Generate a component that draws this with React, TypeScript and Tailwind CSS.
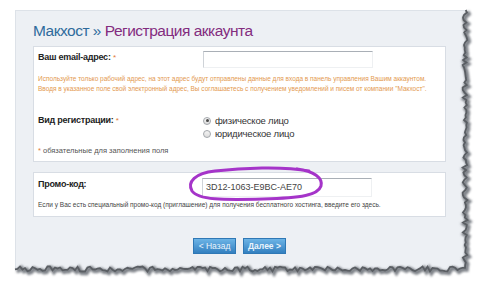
import React from 'react';

// torn-paper edge along the right and bottom of the sheet
const edgePoints: string[] = (() => {
  let s = 11;
  const rnd = () => {
    s = (s * 9301 + 49297) % 233280;
    return s / 233280;
  };
  const pts: string[] = [];
  for (let y = 10; y <= 266; y += 2.5) pts.push(`${(465 + (rnd() - 0.5) * 5).toFixed(1)},${y}`);
  for (let x = 465; x >= 13; x -= 2.5) pts.push(`${x},${(269 + (rnd() - 0.5) * 5).toFixed(1)}`);
  return pts;
})();

function TornEdge() {
  const line = edgePoints.join(' ');
  const cover = `M480,0 L465,0 L${edgePoints.join(' L')} L0,270 L0,287 L480,287 Z`;
  return (
    <svg className="absolute inset-0 pointer-events-none" width="480" height="287" viewBox="0 0 480 287">
      <defs>
        <filter id="blur" x="-5%" y="-5%" width="110%" height="110%">
          <feGaussianBlur stdDeviation="1.2" />
        </filter>
      </defs>
      <path d={cover} fill="#ffffff" />
      <polyline points={line} fill="none" stroke="#80848a" strokeWidth="4.5" filter="url(#blur)" transform="translate(1.5,1.5)" />
      <polyline points={line} fill="none" stroke="#5a5e63" strokeWidth="1.8" />
    </svg>
  );
}

function Radio({ checked, label }: { checked?: boolean; label: string }) {
  return (
    <div className="flex items-center gap-[4px] h-[13px]">
      <span className="w-[8px] h-[8px] rounded-full border border-[#a3a7ac] bg-gradient-to-b from-[#f4f4f4] to-[#dcdcdc] flex items-center justify-center">
        {checked && <span className="w-[3px] h-[3px] rounded-full bg-[#4a4a4a]" />}
      </span>
      <span className="text-[9.5px] leading-[13px] tracking-[-0.2px] text-[#333]">{label}</span>
    </div>
  );
}

const inputCls =
  'w-[170px] bg-white border border-t-[#a9afb6] border-l-[#cfd3d8] border-r-[#eef0f2] border-b-[#eef0f2]';

const labelCls = 'pl-[4px] text-[9px] leading-[13px] tracking-[-0.25px] font-bold text-[#222]';

export default function App() {
  return (
    <div className="relative w-[480px] h-[287px] overflow-hidden bg-white font-['Liberation_Sans',Arial,sans-serif]">
      <div className="pt-[10px] pl-[15px]">
        <div className="w-[458px] h-[265px] bg-[#edf0f4] border-t border-l border-[#dde2e8] pl-[17px] pt-[10px]">
          {/* Title */}
          <h1 className="text-[15.5px] leading-[20px] tracking-[-0.5px]">
            <span className="text-[#2f6b9c]">Макхост »</span>{' '}
            <span className="text-[#832c7f]">Регистрация аккаунта</span>
          </h1>

          {/* Email + type */}
          <div className="mt-[5px] w-[413px] h-[116px] bg-white border border-[#d8dde4]">
            <div className="flex pt-[4px]">
              <div className={`${labelCls} w-[169px]`}>
                Ваш email-адрес: <span className="font-normal text-[8px] text-[#e07b39]">*</span>
              </div>
              <div className={`${inputCls} h-[17px]`} />
            </div>
            <div className="pl-[4px] mt-[6px] text-[6.5px] leading-[10px] text-[#e3994f] whitespace-nowrap">
              <div>
                Используйте только рабочий адрес, на этот адрес будут отправлены данные для входа в панель управления Вашим аккаунтом.
              </div>
              <div>
                Вводя в указанное поле свой электронный адрес, Вы соглашаетесь с получением уведомлений и писем от компании "Макхост".
              </div>
            </div>
            <div className="flex mt-[20px]">
              <div className={`${labelCls} w-[169px]`}>
                Вид регистрации: <span className="font-normal text-[8px] text-[#e07b39]">*</span>
              </div>
              <div className="flex flex-col">
                <Radio checked label="физическое лицо" />
                <Radio label="юридическое лицо" />
              </div>
            </div>
            <div className="pl-[4px] mt-[5px] text-[7.5px] leading-[11px] text-[#555]">
              <span className="text-[#e07b39]">*</span> обязательные для заполнения поля
            </div>
          </div>

          {/* Promo */}
          <div className="relative mt-[10px] w-[413px] h-[45px] bg-white border border-[#d8dde4]">
            <div className="flex pt-[5px]">
              <div className={`${labelCls} w-[168px]`}>Промо-код:</div>
              <div className={`${inputCls} h-[19px] pl-[3px] text-[9px] leading-[17px] text-[#444]`}>3D12-1063-E9BC-AE70</div>
            </div>
            <div className="pl-[4px] mt-[3px] text-[6.5px] leading-[10px] text-[#444] whitespace-nowrap">
              Если у Вас есть специальный промо-код (приглашение) для получения бесплатного хостинга, введите его здесь.
            </div>
            <svg className="absolute left-[147px] top-[-12px] pointer-events-none" width="150" height="45" viewBox="180 160 150 45">
              <path
                d="M296 168 C313 170 322 177 320 185 C317 194 301 197 262 198 C222 199 197 199 191 190 C186 181 194 172 214 170 C240 167 282 165 308 170"
                fill="none"
                stroke="#a534c9"
                strokeWidth="3"
                strokeLinecap="round"
              />
            </svg>
          </div>

          {/* Buttons */}
          <div className="w-[413px] mt-[21px] flex justify-center gap-[7px]">
            <button className="w-[43px] h-[16px] bg-gradient-to-b from-[#6cb4e6] to-[#3380c0] border border-[#2f78b5] text-[8.5px] leading-[14px] text-[#eaf4fc]">
              &lt; Назад
            </button>
            <button className="w-[43px] h-[16px] bg-gradient-to-b from-[#6cb4e6] to-[#3380c0] border border-[#2f78b5] text-[8.5px] leading-[14px] text-[#eaf4fc] font-bold">
              Далее &gt;
            </button>
          </div>
        </div>
      </div>
      <TornEdge />
    </div>
  );
}
